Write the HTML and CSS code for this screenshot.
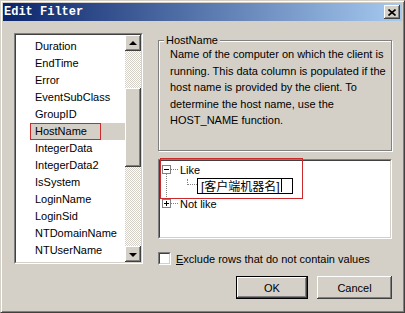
FILE: index.html
```html
<!DOCTYPE html>
<html lang="en">
<head>
    <meta charset="UTF-8">
    <title>Edit Filter</title>
    <link rel="stylesheet" href="styles.css">
</head>
<body>
    <div class="window">
        <div class="titlebar">
            <span class="title">Edit Filter</span>
            <button class="close raised">
                <svg width="8" height="7" viewBox="0 0 8 7"><path d="M0.5 0.5 L7.5 6.5 M7.5 0.5 L0.5 6.5" stroke="#000" stroke-width="1.6"/></svg>
            </button>
        </div>

        <div class="dialog">
            <div class="listbox sunken">
                <div class="sunken-inner list-inner">
                    <ul class="items">
                        <li>Duration</li>
                        <li>EndTime</li>
                        <li>Error</li>
                        <li>EventSubClass</li>
                        <li>GroupID</li>
                        <li class="selected"><span class="picked">HostName</span></li>
                        <li>IntegerData</li>
                        <li>IntegerData2</li>
                        <li>IsSystem</li>
                        <li>LoginName</li>
                        <li>LoginSid</li>
                        <li>NTDomainName</li>
                        <li>NTUserName</li>
                    </ul>
                    <div class="scrollbar">
                        <div class="sb-btn raised"><span class="arrow-up"></span></div>
                        <div class="sb-track"><div class="sb-thumb raised"></div></div>
                        <div class="sb-btn raised"><span class="arrow-down"></span></div>
                    </div>
                </div>
            </div>

            <div class="right">
                <div class="group">
                    <span class="group-title">HostName</span>
                    <p class="desc">Name of the computer on which the client is<br>running. This data column is populated if the<br>host name is provided by the client. To<br>determine the host name, use the<br>HOST_NAME function.</p>
                </div>

                <div class="tree sunken">
                    <div class="sunken-inner tree-inner">
                        <div class="vline"></div>
                        <div class="node">
                            <span class="exp minus"></span><span class="hdots"></span><span>Like</span>
                        </div>
                        <div class="node child">
                            <div class="edit">[客户端机器名]<span class="caret"></span></div>
                        </div>
                        <div class="node">
                            <span class="exp plus"></span><span class="hdots"></span><span>Not like</span>
                        </div>
                        <div class="pick-box"></div>
                    </div>
                </div>

                <label class="check-row">
                    <span class="checkbox sunken"><span class="sunken-inner"></span></span>
                    <span class="check-label"><u>E</u>xclude rows that do not contain values</span>
                </label>

                <div class="buttons">
                    <button class="btn ok raised">OK</button>
                    <button class="btn raised">Cancel</button>
                </div>
            </div>
        </div>
    </div>
</body>
</html>
```

FILE: styles.css
```css
body {
    margin: 0;
    background: #d4d0c8;
    font-family: "Liberation Sans", Arial, sans-serif;
    font-size: 11px;
    color: #000;
}

.window {
    width: 405px;
    height: 313px;
    box-sizing: border-box;
    border: 1px solid;
    border-color: #d4d0c8 #404040 #404040 #d4d0c8;
    padding: 2px;
    box-shadow: inset 1px 1px #fff, inset -1px -1px #808080;
    background: #d4d0c8;
    display: flex;
    flex-direction: column;
}

/* title bar */
.titlebar {
    height: 18px;
    flex-shrink: 0;
    display: flex;
    align-items: center;
    justify-content: space-between;
    padding-left: 1px;
    background: linear-gradient(to right, #0a246a, #a6caf0);
}

.title {
    color: #fff;
    font-family: "Liberation Mono", monospace;
    font-weight: bold;
    font-size: 12px;
}

.close {
    width: 16px;
    height: 14px;
    margin-right: 2px;
    padding: 0;
    border: none;
    display: flex;
    align-items: center;
    justify-content: center;
}

.raised {
    background: #d4d0c8;
    box-shadow: inset -1px -1px #404040, inset 1px 1px #fff, inset -2px -2px #808080, inset 2px 2px #d4d0c8;
}

.sunken {
    box-sizing: border-box;
    border: 1px solid;
    border-color: #808080 #fff #fff #808080;
}

.sunken-inner {
    display: block;
    box-sizing: border-box;
    height: 100%;
    border: 1px solid;
    border-color: #404040 #d4d0c8 #d4d0c8 #404040;
    background: #fff;
}

.dialog {
    display: flex;
    padding: 12px 0 0 11px;
}

/* field list */
.listbox {
    width: 129px;
    height: 231px;
    flex-shrink: 0;
}

.list-inner {
    display: flex;
}

.items {
    list-style: none;
    margin: 0;
    padding: 3px 0 0 0;
    flex: 1;
    overflow: hidden;
}

.items li {
    height: 17px;
    line-height: 17px;
    padding-left: 19px;
    white-space: nowrap;
}

.items li.selected {
    margin-left: 14px;
    padding-left: 0;
    background: #d4d0c8;
}

.picked {
    display: block;
    box-sizing: border-box;
    width: 71px;
    height: 17px;
    line-height: 15px;
    padding-left: 4px;
    border: 1px solid #cc2a2a;
}

.scrollbar {
    width: 16px;
    display: flex;
    flex-direction: column;
}

.sb-btn {
    height: 16px;
    flex-shrink: 0;
    display: flex;
    align-items: center;
    justify-content: center;
}

.arrow-up,
.arrow-down {
    width: 0;
    height: 0;
    border-left: 4px solid transparent;
    border-right: 4px solid transparent;
}

.arrow-up {
    border-bottom: 4px solid #000;
}

.arrow-down {
    border-top: 4px solid #000;
    margin-top: 1px;
}

.sb-track {
    flex: 1;
    background: repeating-conic-gradient(#fff 0 25%, #d4d0c8 0 50%) 0 0 / 2px 2px;
}

.sb-thumb {
    margin-top: 37px;
    height: 79px;
}

/* right side */
.right {
    width: 235px;
    margin-left: 15px;
    display: flex;
    flex-direction: column;
}

.group {
    position: relative;
    box-sizing: border-box;
    width: 234px;
    height: 111px;
    margin-top: 7px;
    border: 1px solid #808080;
    box-shadow: inset 1px 1px #fff, 1px 1px #fff;
}

.group-title {
    position: absolute;
    top: -7px;
    left: 5px;
    padding: 0 2px;
    line-height: 13px;
    background: #d4d0c8;
}

.desc {
    margin: 0;
    padding: 5px 0 0 11px;
    line-height: 16.5px;
}

.tree {
    width: 234px;
    height: 80px;
    margin-top: 8px;
}

.tree-inner {
    position: relative;
}

.node {
    height: 17px;
    display: flex;
    align-items: center;
}

.exp {
    position: relative;
    width: 9px;
    height: 9px;
    box-sizing: border-box;
    margin-left: 2px;
    border: 1px solid #808080;
    background: #fff;
}

.exp::before {
    content: "";
    position: absolute;
    left: 1px;
    top: 3px;
    width: 5px;
    height: 1px;
    background: #000;
}

.exp.plus::after {
    content: "";
    position: absolute;
    left: 3px;
    top: 1px;
    width: 1px;
    height: 5px;
    background: #000;
}

.hdots {
    width: 7px;
    border-top: 1px dotted #808080;
    margin-right: 2px;
}

.vline {
    position: absolute;
    left: 6px;
    top: 13px;
    height: 25px;
    border-left: 1px dotted #808080;
}

.node.child {
    position: relative;
    padding-left: 37px;
}

.node.child::before {
    content: "";
    position: absolute;
    left: 27px;
    top: 1px;
    width: 9px;
    height: 5px;
    border-left: 1px dotted #808080;
    border-bottom: 1px dotted #808080;
}

.edit {
    box-sizing: border-box;
    width: 96px;
    height: 16px;
    margin-top: -2px;
    padding-left: 3px;
    border: 1px solid #000;
    display: flex;
    align-items: center;
    font-family: "Liberation Sans", "Noto Sans CJK SC", sans-serif;
    font-size: 12px;
}

.caret {
    width: 1px;
    height: 13px;
    margin-left: 1px;
    background: #000;
}

.pick-box {
    position: absolute;
    left: 0;
    top: -3px;
    width: 141px;
    height: 39px;
    border: 1px solid #cc2a2a;
}

.check-row {
    display: flex;
    align-items: center;
    margin-top: 13px;
    height: 13px;
}

.checkbox {
    width: 13px;
    height: 13px;
}

.check-label {
    margin-left: 5px;
}

.buttons {
    display: flex;
    justify-content: flex-end;
    gap: 9px;
    margin-top: 11px;
    padding-right: 1px;
}

.btn {
    width: 75px;
    height: 23px;
    padding: 0;
    border: none;
    font-family: "Liberation Sans", Arial, sans-serif;
    font-size: 11px;
    color: #000;
}

.btn.ok {
    width: 72px;
    border: 1px solid #000;
}
```
